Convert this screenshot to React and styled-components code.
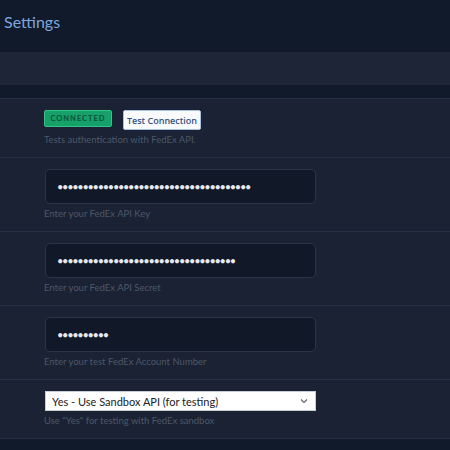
import React from 'react'
import styled, { createGlobalStyle } from 'styled-components'

const GlobalStyle = createGlobalStyle`
    html, body {
        margin: 0;
        padding: 0;
        background: #111a2b;
        font-family: Lato, 'Noto Sans', sans-serif;
    }
`

const Page = styled.div`
    width: 450px;
    height: 450px;
    overflow: hidden;
    background: #111a2b;
`

const Header = styled.header`
    height: 52px;
    box-sizing: border-box;
    padding: 12px 4px 0;
    h1 {
        margin: 0;
        font-size: 16px;
        line-height: 20px;
        font-weight: 400;
        color: #7ea6df;
    }
`

const Band = styled.div`
    height: 33px;
    background: #1d2537;
    margin-bottom: 13px;
`

const Table = styled.div`
    display: flex;
    flex-direction: column;
    background: #1a2233;
    border-bottom: 1px solid #263043;
`

const Row = styled.div`
    border-top: 1px solid #263043;
    padding: 11px 0 10px 44px;
`

const Inline = styled.div`
    display: flex;
    align-items: flex-start;
    gap: 11px;
`

const Badge = styled.span`
    display: inline-flex;
    align-items: center;
    justify-content: center;
    width: 68px;
    height: 17px;
    box-sizing: border-box;
    background: #16a06a;
    border: 1px solid #34c48a;
    border-radius: 2px;
    color: #0a5236;
    font-size: 7.5px;
    font-weight: 700;
    letter-spacing: 1px;
`

const Button = styled.button`
    height: 20px;
    width: 78px;
    box-sizing: border-box;
    padding: 0;
    white-space: nowrap;
    background: #f8fafc;
    border: 1px solid #a9c1e0;
    border-radius: 2px;
    color: #34527a;
    font-family: 'Open Sans', sans-serif;
    font-size: 9px;
    font-weight: 600;
`

const Help = styled.div`
    margin-top: 3px;
    font-size: 9.5px;
    line-height: 14px;
    color: #4d586a;
`

const Input = styled.input`
    display: block;
    width: 271px;
    height: 35px;
    margin-left: 1px;
    box-sizing: border-box;
    padding: 0 11px;
    background: #111827;
    border: 1px solid #2c3547;
    border-radius: 5px;
    color: #e6e9ef;
    font-family: inherit;
    font-size: 11px;
    letter-spacing: -1.3px;
    outline: none;
`

const SelectWrap = styled.div`
    position: relative;
    width: 271px;
    margin-left: 1px;
    svg {
        position: absolute;
        right: 8px;
        top: 7px;
        pointer-events: none;
    }
`

const Select = styled.select`
    display: block;
    width: 100%;
    height: 20px;
    box-sizing: border-box;
    padding: 0 0 0 6px;
    appearance: none;
    background: #ffffff;
    border: 1px solid #c9ced6;
    border-radius: 0;
    color: #222;
    font-family: inherit;
    font-size: 11px;
`

const fields = [
    { value: 'a'.repeat(38), help: 'Enter your FedEx API Key' },
    { value: 'b'.repeat(35), help: 'Enter your FedEx API Secret' },
    { value: 'c'.repeat(10), help: 'Enter your test FedEx Account Number' },
]

const App = () => {
    return (
        <Page>
            <GlobalStyle />
            <Header><h1>Settings</h1></Header>
            <Band />
            <Table>
                <Row>
                    <Inline>
                        <Badge>CONNECTED</Badge>
                        <Button type='button'>Test Connection</Button>
                    </Inline>
                    <Help>Tests authentication with FedEx API.</Help>
                </Row>
                {fields.map((f, idx) => (
                    <Row key={idx}>
                        <Input type='password' defaultValue={f.value} readOnly />
                        <Help>{f.help}</Help>
                    </Row>
                ))}
                <Row>
                    <SelectWrap>
                        <Select defaultValue='yes'>
                            <option value='yes'>Yes - Use Sandbox API (for testing)</option>
                            <option value='no'>No - Use Production API</option>
                        </Select>
                        <svg width="8" height="6" viewBox="0 0 8 6">
                            <path d="M1 1.5 L4 4.5 L7 1.5" fill="none" stroke="#666" strokeWidth="1.2" />
                        </svg>
                    </SelectWrap>
                    <Help>Use "Yes" for testing with FedEx sandbox</Help>
                </Row>
            </Table>
        </Page>
    )
}

export default App
